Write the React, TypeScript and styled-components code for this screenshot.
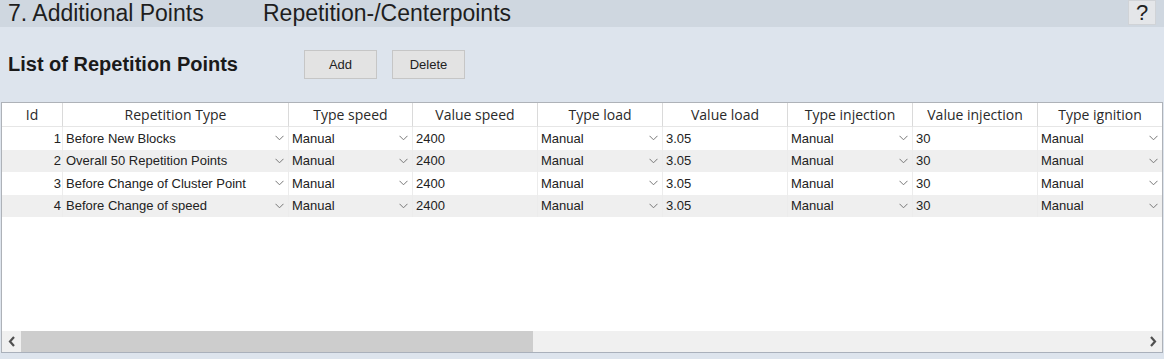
import React from "react";
import styled, { createGlobalStyle } from "styled-components";

const Global = createGlobalStyle`
  html, body { margin: 0; padding: 0; }
  body { background: #dde4ed; font-family: "Liberation Sans", Arial, sans-serif; }
  #root { width: 1164px; height: 359px; overflow: hidden; }
`;

const Page = styled.div`
  width: 1164px;
  height: 359px;
  display: flex;
  flex-direction: column;
  background: #dde4ed;
`;

const TitleBar = styled.div`
  height: 27px;
  flex: none;
  background: #cfd7e0;
  display: flex;
  align-items: center;
  padding-left: 8px;
  color: #1e1e1e;
  font-family: "Liberation Sans", Arial, sans-serif;
  font-size: 23px;
`;

const TitleText = styled.span<{ $w?: number }>`
  width: ${(p) => (p.$w ? `${p.$w}px` : "auto")};
  line-height: 27px;
`;

const HelpButton = styled.div`
  margin-left: auto;
  margin-right: 8px;
  align-self: flex-start;
  width: 28px;
  height: 25px;
  background: #e4e6e9;
  border: 1px solid #d0d3d7;
  box-sizing: border-box;
  display: flex;
  align-items: center;
  justify-content: center;
  font-size: 22px;
  color: #222;
`;

const Toolbar = styled.div`
  height: 75px;
  flex: none;
  display: flex;
  align-items: center;
  padding-left: 8px;
`;

const SectionTitle = styled.h2`
  margin: 0;
  width: 296px;
  font-size: 20px;
  font-weight: bold;
  color: #1a1a1a;
  font-family: "Liberation Sans", Arial, sans-serif;
`;

const Button = styled.button`
  height: 29px;
  width: 73px;
  margin-right: 15px;
  background: #e3e3e3;
  border: 1px solid #c6c6c6;
  font-family: "Liberation Sans", Arial, sans-serif;
  font-size: 13px;
  color: #222;
  padding: 0;
`;

const TableBox = styled.div`
  flex: none;
  margin: 0 1px;
  height: 251px;
  border: 1px solid #aeb2b8;
  border-bottom-color: #a9b0bb;
  background: #fff;
  display: flex;
  flex-direction: column;
  box-sizing: border-box;
`;

const cols = "61px 226px 124px 125px 125px 125px 125px 125px 124px";

const HeaderRow = styled.div`
  display: grid;
  grid-template-columns: ${cols};
  height: 24px;
  flex: none;
  background: #fff;
`;

const HeaderCell = styled.div`
  border-right: 1px solid #dadada;
  border-bottom: 1px solid #e6e6e6;
  display: flex;
  align-items: center;
  justify-content: center;
  font-family: "Open Sans", "Noto Sans", sans-serif;
  font-size: 14px;
  color: #2a2a2a;
  box-sizing: border-box;
  &:last-child { border-right: none; }
`;

const Row = styled.div<{ $alt: boolean }>`
  display: grid;
  grid-template-columns: ${cols};
  height: 22.5px;
  flex: none;
  background: ${(p) => (p.$alt ? "#efefef" : "#fff")};
`;

const Cell = styled.div<{ $align?: "left" | "right" }>`
  display: flex;
  align-items: center;
  justify-content: ${(p) => (p.$align === "right" ? "flex-end" : "flex-start")};
  padding: 0 ${(p) => (p.$align === "right" ? "1px" : "0")} 0 ${(p) => (p.$align === "right" ? "0" : "3px")};
  border-right: 1px solid #ececec;
  font-size: 13px;
  color: #222;
  white-space: nowrap;
  overflow: hidden;
  box-sizing: border-box;
  &:last-child { border-right: none; }
`;

const ComboCell = styled(Cell)`
  justify-content: space-between;
  padding-right: 4px;
`;

const Filler = styled.div`
  flex: 1;
  background: #fff;
`;

const ScrollBar = styled.div`
  height: 21px;
  flex: none;
  background: #f0f0f0;
  display: flex;
  align-items: stretch;
`;

const ArrowBtn = styled.div`
  width: 19px;
  flex: none;
  display: flex;
  align-items: center;
  justify-content: center;
`;

const Thumb = styled.div`
  width: 512px;
  background: #cdcdcd;
`;

const Track = styled.div`
  flex: 1;
`;

const Chevron = () => (
  <svg width="9" height="6" viewBox="0 0 9 6">
    <polyline points="0.5,0.8 4.5,4.8 8.5,0.8" fill="none" stroke="#777" strokeWidth="1" />
  </svg>
);

const Arrow = ({ dir }: { dir: "l" | "r" }) => (
  <svg width="8" height="11" viewBox="0 0 8 11">
    <polyline
      points={dir === "l" ? "6,1 2,5.5 6,10" : "2,1 6,5.5 2,10"}
      fill="none"
      stroke="#505050"
      strokeWidth="2.2"
    />
  </svg>
);

const headers = [
  "Id",
  "Repetition Type",
  "Type speed",
  "Value speed",
  "Type load",
  "Value load",
  "Type injection",
  "Value injection",
  "Type ignition",
];

const rows = [
  { id: 1, type: "Before New Blocks" },
  { id: 2, type: "Overall 50 Repetition Points" },
  { id: 3, type: "Before Change of Cluster Point" },
  { id: 4, type: "Before Change of speed" },
];

const Combo = ({ text }: { text: string }) => (
  <ComboCell>
    <span>{text}</span>
    <Chevron />
  </ComboCell>
);

export default function App() {
  return (
    <Page>
      <Global />
      <TitleBar>
        <TitleText $w={255}>7. Additional Points</TitleText>
        <TitleText>Repetition-/Centerpoints</TitleText>
        <HelpButton>?</HelpButton>
      </TitleBar>
      <Toolbar>
        <SectionTitle>List of Repetition Points</SectionTitle>
        <Button>Add</Button>
        <Button>Delete</Button>
      </Toolbar>
      <TableBox>
        <HeaderRow>
          {headers.map((h) => (
            <HeaderCell key={h}>{h}</HeaderCell>
          ))}
        </HeaderRow>
        {rows.map((r, i) => (
          <Row key={r.id} $alt={i % 2 === 1}>
            <Cell $align="right">{r.id}</Cell>
            <Combo text={r.type} />
            <Combo text="Manual" />
            <Cell>2400</Cell>
            <Combo text="Manual" />
            <Cell>3.05</Cell>
            <Combo text="Manual" />
            <Cell>30</Cell>
            <Combo text="Manual" />
          </Row>
        ))}
        <Filler />
        <ScrollBar>
          <ArrowBtn>
            <Arrow dir="l" />
          </ArrowBtn>
          <Thumb />
          <Track />
          <ArrowBtn>
            <Arrow dir="r" />
          </ArrowBtn>
        </ScrollBar>
      </TableBox>
    </Page>
  );
}
